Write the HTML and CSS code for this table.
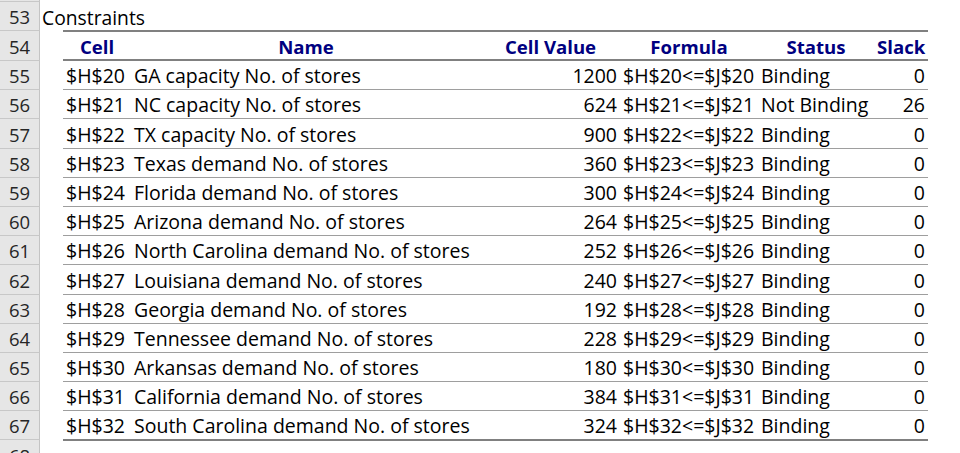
FILE: index.html
```html
<!DOCTYPE html>
<html>
<head>
<meta charset="utf-8">
<link rel="stylesheet" href="styles.css">
</head>
<body>
<div class="sheet">
  <div class="row h2"><div class="rh"></div></div>
  <div class="row h29"><div class="rh">53</div><div class="ca"><span class="title">Constraints</span></div></div>
  <div class="row h30 hdr"><div class="rh">54</div><div class="ca"></div>
    <div class="t"><div class="c ctr">Cell</div><div class="c ctr">Name</div><div class="c ctr">Cell Value</div><div class="c ctr">Formula</div><div class="c ctr">Status</div><div class="c ctr">Slack</div></div></div>
  <div class="row h29"><div class="rh">55</div><div class="ca"></div>
    <div class="t"><div class="c">$H$20</div><div class="c">GA capacity No. of stores</div><div class="c num">1200</div><div class="c">$H$20&lt;=$J$20</div><div class="c">Binding</div><div class="c num">0</div></div></div>
  <div class="row h29"><div class="rh">56</div><div class="ca"></div>
    <div class="t"><div class="c">$H$21</div><div class="c">NC capacity No. of stores</div><div class="c num">624</div><div class="c">$H$21&lt;=$J$21</div><div class="c">Not Binding</div><div class="c num">26</div></div></div>
  <div class="row h30"><div class="rh">57</div><div class="ca"></div>
    <div class="t"><div class="c">$H$22</div><div class="c">TX capacity No. of stores</div><div class="c num">900</div><div class="c">$H$22&lt;=$J$22</div><div class="c">Binding</div><div class="c num">0</div></div></div>
  <div class="row h29"><div class="rh">58</div><div class="ca"></div>
    <div class="t"><div class="c">$H$23</div><div class="c">Texas demand No. of stores</div><div class="c num">360</div><div class="c">$H$23&lt;=$J$23</div><div class="c">Binding</div><div class="c num">0</div></div></div>
  <div class="row h29"><div class="rh">59</div><div class="ca"></div>
    <div class="t"><div class="c">$H$24</div><div class="c">Florida demand No. of stores</div><div class="c num">300</div><div class="c">$H$24&lt;=$J$24</div><div class="c">Binding</div><div class="c num">0</div></div></div>
  <div class="row h29"><div class="rh">60</div><div class="ca"></div>
    <div class="t"><div class="c">$H$25</div><div class="c">Arizona demand No. of stores</div><div class="c num">264</div><div class="c">$H$25&lt;=$J$25</div><div class="c">Binding</div><div class="c num">0</div></div></div>
  <div class="row h29"><div class="rh">61</div><div class="ca"></div>
    <div class="t"><div class="c">$H$26</div><div class="c">North Carolina demand No. of stores</div><div class="c num">252</div><div class="c">$H$26&lt;=$J$26</div><div class="c">Binding</div><div class="c num">0</div></div></div>
  <div class="row h30"><div class="rh">62</div><div class="ca"></div>
    <div class="t"><div class="c">$H$27</div><div class="c">Louisiana demand No. of stores</div><div class="c num">240</div><div class="c">$H$27&lt;=$J$27</div><div class="c">Binding</div><div class="c num">0</div></div></div>
  <div class="row h29"><div class="rh">63</div><div class="ca"></div>
    <div class="t"><div class="c">$H$28</div><div class="c">Georgia demand No. of stores</div><div class="c num">192</div><div class="c">$H$28&lt;=$J$28</div><div class="c">Binding</div><div class="c num">0</div></div></div>
  <div class="row h29"><div class="rh">64</div><div class="ca"></div>
    <div class="t"><div class="c">$H$29</div><div class="c">Tennessee demand No. of stores</div><div class="c num">228</div><div class="c">$H$29&lt;=$J$29</div><div class="c">Binding</div><div class="c num">0</div></div></div>
  <div class="row h29"><div class="rh">65</div><div class="ca"></div>
    <div class="t"><div class="c">$H$30</div><div class="c">Arkansas demand No. of stores</div><div class="c num">180</div><div class="c">$H$30&lt;=$J$30</div><div class="c">Binding</div><div class="c num">0</div></div></div>
  <div class="row h29"><div class="rh">66</div><div class="ca"></div>
    <div class="t"><div class="c">$H$31</div><div class="c">California demand No. of stores</div><div class="c num">384</div><div class="c">$H$31&lt;=$J$31</div><div class="c">Binding</div><div class="c num">0</div></div></div>
  <div class="row h29 last"><div class="rh">67</div><div class="ca"></div>
    <div class="t"><div class="c">$H$32</div><div class="c">South Carolina demand No. of stores</div><div class="c num">324</div><div class="c">$H$32&lt;=$J$32</div><div class="c">Binding</div><div class="c num">0</div></div></div>
  <div class="row h30"><div class="rh">68</div></div>
</div>
</body>
</html>
```
FILE: styles.css
```css
html, body {
  margin: 0;
  padding: 0;
  background: #ffffff;
  overflow: hidden;
}
.sheet {
  font-family: "Open Sans", "Noto Sans", sans-serif;
  font-size: 19.5px;
  color: #000000;
  width: 960px;
}
.row {
  display: flex;
  box-sizing: border-box;
}
.h2 { height: 2px; }
.h29 { height: 29px; }
.h30 { height: 30px; }
.rh {
  width: 40px;
  flex: none;
  box-sizing: border-box;
  background: #e6e6e6;
  border-right: 1px solid #c4c4c4;
  border-bottom: 1px solid #c8c8c8;
  display: flex;
  align-items: center;
  justify-content: center;
  font-size: 18.5px;
  color: #262626;
  padding-top: 1px;
}
.ca {
  width: 23px;
  flex: none;
  position: relative;
  display: flex;
  align-items: center;
}
.title {
  white-space: nowrap;
  padding-left: 2px;
  padding-top: 2px;
  font-size: 19.3px;
}
.t {
  width: 865px;
  flex: none;
  box-sizing: border-box;
  display: grid;
  grid-template-columns: 68px 350px 139px 138px 116px 54px;
  align-items: center;
  border-bottom: 1px solid #9e9e9e;
}
.hdr .t {
  border-top: 2px solid #808080;
  border-bottom: 2px solid #808080;
  margin-top: -1px;
  height: 31px;
  font-weight: 700;
  font-size: 18.6px;
  color: #000080;
}
.last .t {
  border-bottom: 2px solid #808080;
  height: 30px;
}
.c {
  padding: 1px 3px 0 3px;
  white-space: nowrap;
  overflow: visible;
}
.ctr { text-align: center; }
.num { text-align: right; }
```
